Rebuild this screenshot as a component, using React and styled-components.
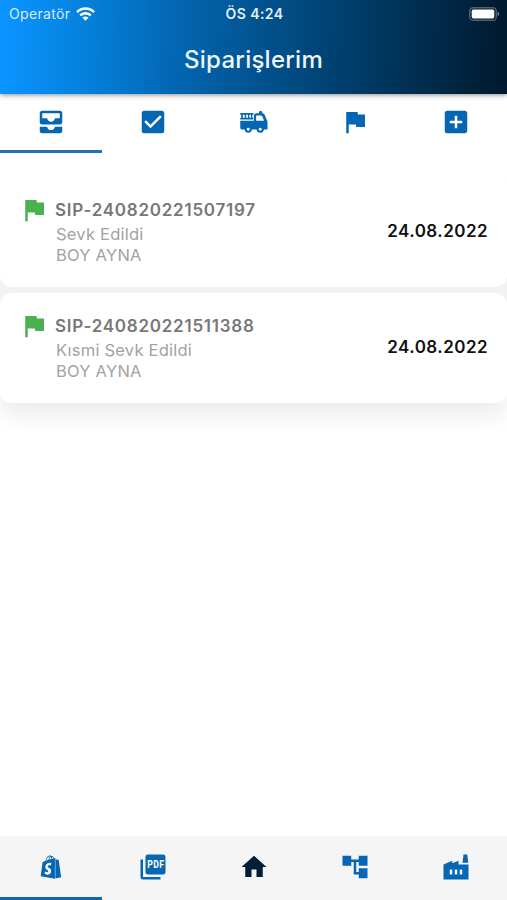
import React from 'react';
import styled, { createGlobalStyle } from 'styled-components';
import { MdAccountTree, MdAddBox, MdCheckBox, MdFactory, MdFlag, MdHome } from 'react-icons/md';
import { FaShopify } from 'react-icons/fa';

const GlobalStyle = createGlobalStyle`
  * {
    box-sizing: border-box;
  }

  body {
    margin: 0;
    background: #ffffff;
    font-family: Inter, Roboto, sans-serif;
  }
`;

const Screen = styled.div`
  display: flex;
  flex-direction: column;
  height: 900px;
  overflow: hidden;
`;

const Header = styled.header`
  position: relative;
  z-index: 1;
  height: 94px;
  flex-shrink: 0;
  color: #ffffff;
  background: linear-gradient(92deg, #0a94ff 1%, #0581dc 17%, #0367b3 34%, #00406f 67%, #002d4e 83%, #001a2e 99%);
  box-shadow: 0 1px 5px rgba(0, 0, 0, 0.45);
`;

const StatusBar = styled.div`
  display: grid;
  grid-template-columns: 1fr auto 1fr;
  align-items: center;
  height: 27px;
  padding: 0 7px 0 9px;
  font-size: 14px;
  line-height: 17px;
`;

const Carrier = styled.div`
  display: flex;
  align-items: center;
  gap: 6px;
  color: #d8ecff;
  letter-spacing: 0.35px;
`;

const Clock = styled.div`
  font-size: 14px;
  font-weight: 600;
  letter-spacing: 0.4px;
  color: #e4eff8;
`;

const BatteryIcon = styled.svg`
  justify-self: end;
`;

const Title = styled.h1`
  margin: 16px 0 0;
  font-size: 24px;
  font-weight: 500;
  line-height: 34px;
  letter-spacing: 0.25px;
  text-align: center;
  color: #eef5fb;
`;

const TabBar = styled.nav`
  display: flex;
  flex-shrink: 0;
  height: ${({ $bottom }) => ($bottom ? '64px' : '59px')};
  background: ${({ $bottom }) => ($bottom ? '#f5f5f5' : '#ffffff')};
`;

const Tab = styled.div`
  display: flex;
  flex: ${({ $active }) => ($active ? '0 0 102px' : '1')};
  align-items: center;
  justify-content: center;
  padding-bottom: ${({ $bottom }) => ($bottom ? '0' : '1px')};
  color: ${({ $dark }) => ($dark ? '#001e36' : '#0566b3')};
  border-bottom: 3px solid ${({ $active, $bottom }) => ($active ? ($bottom ? '#0d69b4' : '#2470b2') : 'transparent')};

  svg {
    flex-shrink: 0;
  }
`;

const OrderList = styled.main`
  flex: 1;
  padding-top: 18px;
`;

const ListPanel = styled.div`
  display: flex;
  flex-direction: column;
  gap: 6px;
  border-radius: 12px;
  background: linear-gradient(#ffffff 60px, #f2f2f2 100px);
  box-shadow: 0 14px 20px rgba(0, 0, 0, 0.07);
`;

const StyledOrderCard = styled.div`
  display: flex;
  align-items: center;
  height: ${({ $first }) => ($first ? '116px' : '110px')};
  padding: ${({ $first }) => ($first ? '4px' : '0')} 19px ${({ $first }) => ($first ? '0' : '2px')} 19px;
  border-radius: 12px;
  background: #ffffff;
`;

const FlagColumn = styled.div`
  align-self: flex-start;
  width: 36px;
  padding-top: ${({ $first }) => ($first ? '20px' : '18px')};
  color: #4caf50;
`;

const OrderInfo = styled.div`
  flex: 1;
  padding-top: 2px;
`;

const OrderCode = styled.div`
  margin-bottom: 2px;
  font-size: 17px;
  font-weight: 600;
  line-height: 24px;
  letter-spacing: 0.75px;
  color: #777777;
`;

const OrderDetail = styled.div`
  padding-left: 1px;
  font-size: 16.5px;
  line-height: 21px;
  letter-spacing: 0.23px;
  color: #a2a2a2;
`;

const OrderDate = styled.div`
  font-size: 17px;
  font-weight: 600;
  letter-spacing: 0.45px;
  color: #111111;
`;

const orders = [
  { code: 'SIP-240820221507197', status: 'Sevk Edildi', customer: 'BOY AYNA', date: '24.08.2022' },
  { code: 'SIP-240820221511388', status: 'Kısmi Sevk Edildi', customer: 'BOY AYNA', date: '24.08.2022' },
];

function WifiIcon() {
  return (
    <svg width="19" height="14" viewBox="0 0 19 14" fill="none" stroke="#ffffff" strokeWidth="2.5">
      <path d="M1 5.1C5.8.3 13.2.3 18 5.1" />
      <path d="M4.2 8.4c3-3 7.6-3 10.6 0" />
      <path d="M9.5 13.8 6.5 10.7c1.7-1.6 4.3-1.6 6 0z" fill="#ffffff" stroke="none" />
    </svg>
  );
}

function Battery() {
  return (
    <BatteryIcon width="31" height="14" viewBox="0 0 31 14">
      <rect x="0.7" y="0.7" width="26.6" height="12.6" rx="3.6" fill="none" stroke="#ffffff" strokeOpacity="0.3" strokeWidth="1.4" />
      <rect x="2.7" y="2.5" width="22.6" height="9" rx="1.8" fill="#ffffff" />
      <path d="M28.6 4.8c2 .6 2 3.8 0 4.4z" fill="#ffffff" fillOpacity="0.45" />
    </BatteryIcon>
  );
}

// Two stacked trays, the lower one solid
function InboxIcon({ size }) {
  return (
    <svg width={size} height={size} viewBox="0 0 24 24" fill="currentColor" fillRule="evenodd">
      <path d="M5 3h14a2 2 0 0 1 2 2v7a2 2 0 0 1-2 2H5a2 2 0 0 1-2-2V5a2 2 0 0 1 2-2zM5 5v4h3.800c.4 1.600 1.600 2.700 3.200 2.700s2.800-1.100 3.200-2.700H19V5z" />
      <path d="M3 15.700h5.800c.4 1.600 1.600 2.700 3.200 2.700s2.800-1.100 3.200-2.700H21V19a2 2 0 0 1-2 2H5a2 2 0 0 1-2-2z" />
    </svg>
  );
}

function FireTruckIcon({ size }) {
  return (
    <svg width={size} height={size} viewBox="0 0 24 24" fill="currentColor" fillRule="evenodd">
      <path d="M1 4.800h10.500v1.300h-.8v2.500h.8v1.300H1V8.600h.8V6.100H1zM3.100 6.100v2.500h1.500V6.100zM5.700 6.100v2.500h1.500V6.100zM8.300 6.100v2.500h1.300V6.100z" />
      <path d="M16 5v-.8a1.300 1.300 0 0 1 2.600 0V5c1 .1 1.700.6 2 1.400l1.900 4.600c.2.400.3.800.3 1.200V18h-3.200a3 3 0 0 1-5.600 0h-3.900a3 3 0 0 1-5.600 0H2.500C1.700 18 1 17.300 1 16.500V11h11V7c0-1.100.9-2 2-2zM13.700 6.800V11h6.400l-1.500-3.600c-.2-.4-.5-.6-.9-.6z" />
      <circle cx="7.400" cy="17.700" r="2.800" />
      <circle cx="17" cy="17.700" r="2.800" />
      <circle cx="7.400" cy="17.800" r="1.150" fill="#ffffff" />
      <circle cx="17" cy="17.800" r="1.150" fill="#ffffff" />
    </svg>
  );
}

function PdfIcon({ size }) {
  return (
    <svg width={size} height={size} viewBox="0 0 24 24" fill="currentColor">
      <path d="M2 6h2v14h14v2H4c-1.100 0-2-.9-2-2z" />
      <rect x="6" y="2" width="16" height="16" rx="2" />
      <text x="7.300" y="13" fill="#f5f5f5" fontFamily="Roboto, sans-serif" fontSize="8.200" fontWeight="800" letterSpacing="0.4" textLength="13.800" lengthAdjust="spacingAndGlyphs">PDF</text>
    </svg>
  );
}

function OrderCard({ order, first }) {
  return (
    <StyledOrderCard $first={first}>
      <FlagColumn $first={first}>
        <MdFlag size={30} />
      </FlagColumn>
      <OrderInfo>
        <OrderCode>{order.code}</OrderCode>
        <OrderDetail>{order.status}</OrderDetail>
        <OrderDetail>{order.customer}</OrderDetail>
      </OrderInfo>
      <OrderDate>{order.date}</OrderDate>
    </StyledOrderCard>
  );
}

function App() {
  return (
    <Screen>
      <GlobalStyle />
      <Header>
        <StatusBar>
          <Carrier>
            Operatör
            <WifiIcon />
          </Carrier>
          <Clock>ÖS 4:24</Clock>
          <Battery />
        </StatusBar>
        <Title>Siparişlerim</Title>
      </Header>
      <TabBar>
        <Tab $active><InboxIcon size={30} /></Tab>
        <Tab><MdCheckBox size={30} /></Tab>
        <Tab><FireTruckIcon size={30} /></Tab>
        <Tab><MdFlag size={30} /></Tab>
        <Tab><MdAddBox size={30} /></Tab>
      </TabBar>
      <OrderList>
        <ListPanel>
          {orders.map((order, index) => (
            <OrderCard key={order.code} order={order} first={index === 0} />
          ))}
        </ListPanel>
      </OrderList>
      <TabBar $bottom>
        <Tab $bottom $active><FaShopify size={24} /></Tab>
        <Tab $bottom><PdfIcon size={30} /></Tab>
        <Tab $bottom $dark><MdHome size={30} /></Tab>
        <Tab $bottom><MdAccountTree size={30} /></Tab>
        <Tab $bottom><MdFactory size={30} /></Tab>
      </TabBar>
    </Screen>
  );
}

export default App;
